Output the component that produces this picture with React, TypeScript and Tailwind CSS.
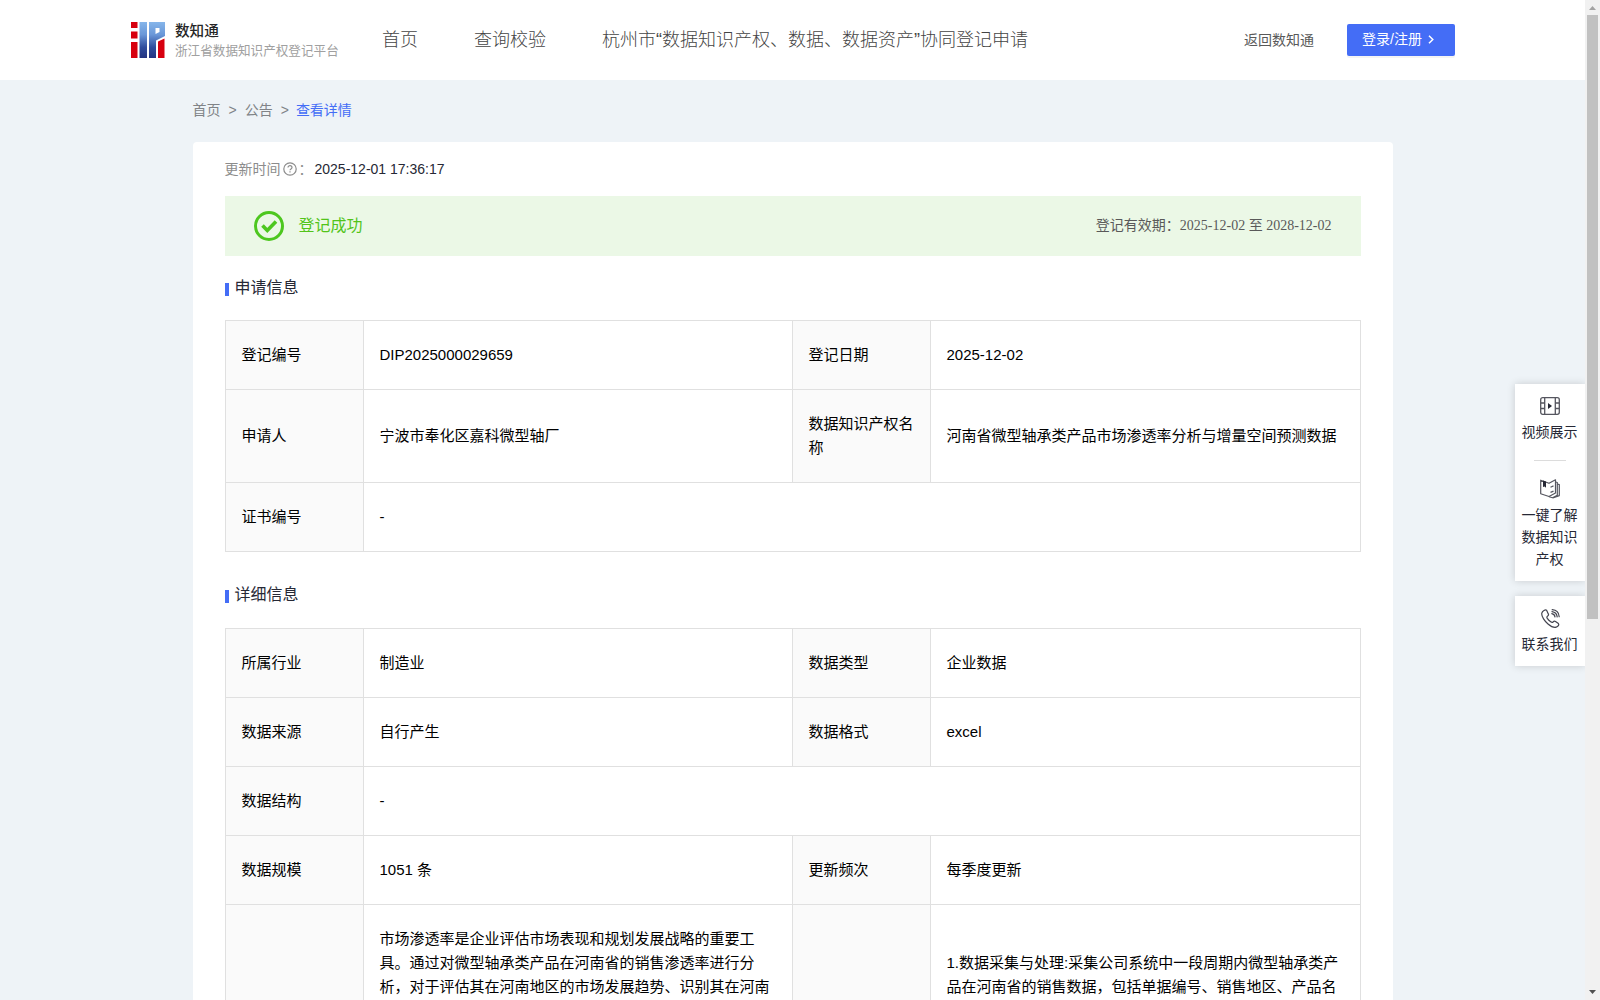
import React from "react";

type Row = string[];

const applyRows: Row[] = [
  ["登记编号", "DIP2025000029659", "登记日期", "2025-12-02"],
  ["申请人", "宁波市奉化区嘉科微型轴厂", "数据知识产权名称", "河南省微型轴承类产品市场渗透率分析与增量空间预测数据"],
  ["证书编号", "-"],
];

const detailRows: Row[] = [
  ["所属行业", "制造业", "数据类型", "企业数据"],
  ["数据来源", "自行产生", "数据格式", "excel"],
  ["数据结构", "-"],
  ["数据规模", "1051 条", "更新频次", "每季度更新"],
];

function Cell({ children, label, span, top }: { children?: React.ReactNode; label?: boolean; span?: number; top?: boolean }) {
  return (
    <td
      colSpan={span}
      className={
        "border border-[#e0e0e0] px-4 py-[22px] leading-6 " +
        (label ? "bg-[#fafafa] " : "") +
        (top ? "align-top" : "align-middle")
      }
    >
      {children}
    </td>
  );
}

function InfoTable({ rows, children }: { rows: Row[]; children?: React.ReactNode }) {
  return (
    <table className="w-[1135px] table-fixed border-collapse text-[15px] text-black">
      <colgroup>
        <col className="w-[138px]" />
        <col className="w-[429px]" />
        <col className="w-[138px]" />
        <col className="w-[430px]" />
      </colgroup>
      <tbody>
        {rows.map((r) => (
          <tr key={r[0]}>
            <Cell label>{r[0]}</Cell>
            <Cell span={r.length === 2 ? 3 : 1}>{r[1]}</Cell>
            {r.length > 2 && <Cell label>{r[2]}</Cell>}
            {r.length > 2 && <Cell>{r[3]}</Cell>}
          </tr>
        ))}
        {children}
      </tbody>
    </table>
  );
}

function SectionTitle({ children }: { children: React.ReactNode }) {
  return (
    <h2 className="flex h-6 items-center text-base text-[#262835]">
      <span className="mt-[2px] mr-[6px] h-[13px] w-1 bg-[#446df6]" />
      <span>{children}</span>
    </h2>
  );
}

function Logo() {
  return (
    <svg width="34" height="36" viewBox="0 0 34 36">
      <defs>
        <linearGradient id="blue" gradientUnits="userSpaceOnUse" x1="0" y1="0" x2="0" y2="36">
          <stop offset="0" stopColor="#86b6ea" />
          <stop offset="0.35" stopColor="#6a97d8" />
          <stop offset="0.7" stopColor="#2f4d9d" />
          <stop offset="1" stopColor="#243481" />
        </linearGradient>
      </defs>
      <path fill="#d7000f" d="M0 0h6.500v6H0zM0 9.500h6.500v7H0zM0 20h6.500v16H0zM27 19.500l6.500-3v19.500H27z" />
      <path fill="url(#blue)" d="M8.500 0h7.500v36H8.500z" />
      <path fill="url(#blue)" fillRule="evenodd" d="M18 0h16v14l-9 4.500v17.500h-7zM24.500 6v6l4-2V6z" />
    </svg>
  );
}

function FilmIcon() {
  return (
    <svg width="20" height="18" viewBox="0 0 20 18" fill="none" stroke="#55565f" strokeWidth="1.300">
      <rect x="0.700" y="0.700" width="18.600" height="16.600" rx="2" />
      <path d="M4.700 1v16M15.300 1v16M1 6h3.500M1 11.500h3.500M15.500 6H19M15.500 11.500H19" />
      <path d="M8 6v6l4-3z" fill="#262835" stroke="none" />
    </svg>
  );
}

function BookIcon() {
  return (
    <svg width="20" height="20" viewBox="0 0 20 20" fill="none" stroke="#55565f" strokeWidth="1.200" strokeLinejoin="round">
      <path d="M0.700 1.200L9 4.300l6.500-3.500V14L9 17.500.700 14.800z" />
      <path d="M15.700 3l1.600.5v12.800l-4.800 2.500L9 17.700M17.500 5l1.800.6v11l-6.500 2.400" />
      <path d="M10.500 8.200l3-1.300M10.500 13.400l3-1.300" />
      <path d="M3 1.500l3 1v6.200L4.600 7.500 3 8z" fill="#262835" stroke="none" />
    </svg>
  );
}

function PhoneIcon() {
  return (
    <svg width="19" height="19" viewBox="0 0 19 19" fill="none" stroke="#43444f" strokeWidth="1.200" strokeLinecap="round" strokeLinejoin="round">
      <path d="M5.600 1.300C4.400.2 1.400 1.800.8 4.200.2 7.500 4 12.500 7 15c3 2.600 6 3.800 8.200 3.200 1.800-.5 3.200-2.400 2.200-3.600l-2.900-2.200c-.9-.6-1.700-.3-2.500.6-.7.700-1.300.5-2.300-.2C8.400 11.900 7.200 10.700 6.300 9.400c-.6-1-.7-1.500.1-2.100 1-.7 1.500-1.400.9-2.400z" />
      <path d="M10.800 4.600c1.800.3 3 1.600 3.200 3.300M11 2.600c2.900.4 4.900 2.300 5.200 5.300M11.200.7c3.900.3 6.700 3 7 7" />
    </svg>
  );
}

function App() {
  return (
    <div className="relative flex h-[1000px] w-[1600px] overflow-hidden bg-[#eef3f7] font-['Liberation_Sans','Noto_Sans_CJK_SC',sans-serif]">
      <div className="flex min-w-0 flex-1 flex-col">
        <header className="flex h-20 shrink-0 items-center bg-white pl-[131px] text-[#595959]">
          <Logo />
          <div className="ml-[10px] w-[207px]">
            <div className="mt-[1px] text-[14.600px] leading-5 font-medium text-[#262626]">数知通</div>
            <div className="pt-px text-[12.600px] leading-[19px] whitespace-nowrap text-[#a0a0a0]">浙江省数据知识产权登记平台</div>
          </div>
          <nav className="flex gap-14 text-lg font-light whitespace-nowrap text-[#444444]">
            <a>首页</a>
            <a>查询校验</a>
            <a>杭州市“数据知识产权、数据、数据资产”协同登记申请</a>
          </nav>
          <a className="ml-auto pb-px text-sm">返回数知通</a>
          <button className="mr-[130px] ml-[33px] flex h-8 w-[108px] items-center rounded-[2px] bg-[#446df6] pb-[2px] pl-[15px] text-sm whitespace-nowrap text-white shadow-[0_2px_0_rgba(0,0,0,0.045)]">
            登录/注册
            <svg className="ml-[6px]" width="6" height="9" viewBox="0 0 6 9" fill="none" stroke="white" strokeWidth="1.500">
              <path d="M1 .7l3.800 3.800L1 8.300" />
            </svg>
          </button>
        </header>

        <div className="mx-auto flex w-[1200px] flex-1 flex-col">
          <div className="flex h-[62px] shrink-0 items-center pb-[2px] text-sm text-[#808387]">
            <span>首页</span>
            <span className="mx-2">&gt;</span>
            <span>公告</span>
            <span className="mr-[7px] ml-2">&gt;</span>
            <span className="text-[#446df6]">查看详情</span>
          </div>
          <main className="flex flex-1 flex-col rounded-t bg-white px-8">
            <div className="mt-4 flex h-[22px] items-center pb-px text-sm text-[#8c8c8c]">
              更新时间
              <svg className="mx-[2px] mt-px" width="14" height="14" viewBox="0 0 14 14" fill="none" stroke="#8c8c8c" strokeWidth="1.200">
                <circle cx="7" cy="7" r="6.200" />
                <path d="M5 5.600c0-2.700 4-2.600 4 0 0 1.300-2 1.400-2 2.700M7 9.300v1.200" />
              </svg>
              <span className="w-4">：</span>
              <span className="text-sm text-[#262835]">2025-12-01 17:36:17</span>
            </div>
            <div className="mt-4 flex h-[60px] shrink-0 items-center bg-[#ebf8e6] px-[29px]">
              <svg width="30" height="30" viewBox="0 0 30 30" fill="none" stroke="#4dc71f" strokeWidth="3">
                <circle cx="15" cy="15" r="13.500" />
                <path d="M8.500 14.500l4.800 5 8.700-9" strokeWidth="3.600" />
              </svg>
              <span className="ml-[15px] pb-px text-base text-[#52c41a]">登记成功</span>
              <span className="ml-auto pb-px font-['Liberation_Serif','Noto_Sans_CJK_SC',serif] text-sm text-[#595959]">
                登记有效期：2025-12-02 至 2028-12-02
              </span>
            </div>
            <div className="mt-[20px] mb-[20px]">
              <SectionTitle>申请信息</SectionTitle>
            </div>
            <InfoTable rows={applyRows} />
            <div className="mt-[31px] mb-[21px]">
              <SectionTitle>详细信息</SectionTitle>
            </div>
            <InfoTable rows={detailRows}>
              <tr className="h-[180px]">
                <Cell label />
                <Cell top>
                  市场渗透率是企业评估市场表现和规划发展战略的重要工具。通过对微型轴承类产品在河南省的销售渗透率进行分析，对于评估其在河南地区的市场发展趋势、识别其在河南
                </Cell>
                <Cell label />
                <Cell top>
                  <div className="pt-6">
                    1.数据采集与处理:采集公司系统中一段周期内微型轴承类产品在河南省的销售数据，包括单据编号、销售地区、产品名
                  </div>
                </Cell>
              </tr>
            </InfoTable>
          </main>
        </div>
      </div>

      <aside className="absolute top-[384px] right-[15px] flex w-[70px] flex-col gap-[15px] text-sm leading-[22px] text-[#262835]">
        <div className="flex h-[197px] flex-col items-center bg-white pt-[13px] text-center shadow-[0_0_8px_rgba(0,0,0,0.16)]">
          <FilmIcon />
          <span className="mt-[6px] mr-px">视频展示</span>
          <span className="mt-[17px] mb-[18px] h-px w-8 shrink-0 bg-[#dcdcdc]" />
          <BookIcon />
          <span className="mt-[5px] mr-px w-14">一键了解数据知识产权</span>
        </div>
        <div className="flex h-[70px] flex-col items-center bg-white pt-[13px] shadow-[0_0_8px_rgba(0,0,0,0.16)]">
          <PhoneIcon />
          <span className="mt-[5px] mr-px">联系我们</span>
        </div>
      </aside>

      <div className="relative z-10 flex w-[15px] shrink-0 flex-col items-center bg-[#f1f1f1]">
        <svg width="15" height="15" viewBox="0 0 15 15"><path d="M4 10l3.500-4 3.500 4z" fill="#a3a3a3" /></svg>
        <div className="h-[604px] w-[11px] bg-[#c1c1c1]" />
        <svg className="mt-auto" width="15" height="15" viewBox="0 0 15 15"><path d="M4 5h7l-3.500 4z" fill="#505050" /></svg>
      </div>
    </div>
  );
}

export default App;
